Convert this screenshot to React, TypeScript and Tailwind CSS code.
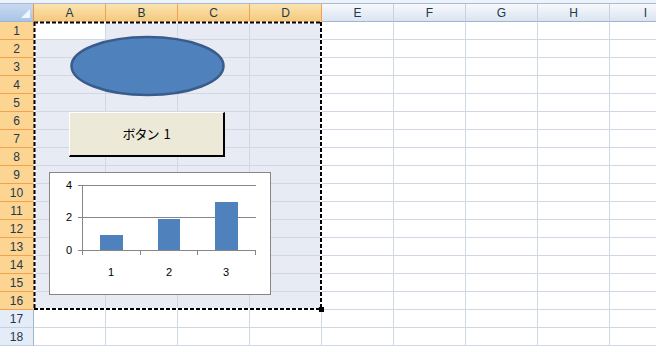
import React from "react";

const cols = ["A", "B", "C", "D", "E", "F", "G", "H", "I"];
const rows = Array.from({ length: 18 }, (_, i) => i + 1);

function ColHeader({ label, selected }: { label: string; selected: boolean }) {
  return (
    <div
      className={
        selected
          ? "w-[72px] shrink-0 h-full flex items-center justify-center border-r border-b border-r-[#f2a24f] border-b-[#f29536] bg-linear-to-b from-[#fbe4b0] to-[#f5c97c]"
          : "w-[72px] shrink-0 h-full flex items-center justify-center border-r border-b border-r-[#c5d2e3] border-b-[#9eb6ce] bg-linear-to-b from-[#f7f9fc] to-[#dbe4f0]"
      }
    >
      {label}
    </div>
  );
}

function Row({ n }: { n: number }) {
  const sel = n <= 16;
  return (
    <div className="flex h-[18px]">
      <div
        className={
          sel
            ? "w-[34px] shrink-0 flex items-center justify-center border-r border-b border-r-[#f29536] border-b-[#f2a24f] bg-[#fdd592]"
            : "w-[34px] shrink-0 flex items-center justify-center border-r border-b border-r-[#9eb6ce] border-b-[#c5d2e3] bg-[#e4ecf7]"
        }
      >
        {n}
      </div>
      {cols.map((c, i) => {
        const inSel = sel && i < 4;
        const active = n === 1 && i === 0;
        return (
          <div
            key={c}
            className={
              active || !inSel
                ? "w-[72px] shrink-0 border-r border-b border-[#d0d7e5] bg-white"
                : "w-[72px] shrink-0 border-r border-b border-[#d0d7e5] bg-[#e9ebf4]"
            }
          />
        );
      })}
    </div>
  );
}

function Chart() {
  return (
    <svg
      className="absolute left-[49px] top-[172px] text-[11px] font-['Liberation_Sans',Arial,sans-serif]"
      width={222}
      height={123}
      viewBox="49 172 222 123"
    >
      <rect x={49.5} y={172.5} width={221} height={122} fill="#ffffff" stroke="#868686" />
      <line x1={78} y1={185.5} x2={256} y2={185.5} stroke="#868686" />
      <line x1={78} y1={217.5} x2={256} y2={217.5} stroke="#868686" />
      <line x1={78} y1={250.5} x2={256} y2={250.5} stroke="#868686" />
      <line x1={82.5} y1={185} x2={82.5} y2={255} stroke="#868686" />
      <line x1={140.5} y1={250} x2={140.5} y2={255} stroke="#868686" />
      <line x1={197.5} y1={250} x2={197.5} y2={255} stroke="#868686" />
      <line x1={255.5} y1={250} x2={255.5} y2={255} stroke="#868686" />
      <rect x={100} y={235} width={23} height={15} fill="#4f81bd" />
      <rect x={158} y={219} width={22} height={31} fill="#4f81bd" />
      <rect x={215} y={202} width={23} height={48} fill="#4f81bd" />
      <text x={72} y={189} textAnchor="end" fill="#000">4</text>
      <text x={72} y={221} textAnchor="end" fill="#000">2</text>
      <text x={72} y={254} textAnchor="end" fill="#000">0</text>
      <text x={111} y={276} textAnchor="middle" fill="#000">1</text>
      <text x={169} y={276} textAnchor="middle" fill="#000">2</text>
      <text x={226} y={276} textAnchor="middle" fill="#000">3</text>
    </svg>
  );
}

export default function App() {
  return (
    <div className="relative w-[656px] h-[349px] overflow-hidden bg-white text-[12px] text-[#22394d] font-['Liberation_Sans',Arial,sans-serif]">
      <div className="h-[4px] bg-[#eef3fa] border-b border-[#a6bcd6]" />
      <div className="flex h-[18px]">
        <div className="relative w-[34px] shrink-0 h-full border-r border-b border-r-[#f29536] border-b-[#9eb6ce] bg-linear-to-b from-[#c9daf2] to-[#a9c4e8]">
          <svg className="absolute right-[3px] bottom-[3px]" width={9} height={9} viewBox="0 0 9 9">
            <polygon points="9,0 9,9 0,9" fill="#f2f5fa" />
          </svg>
        </div>
        {cols.map((c, i) => (
          <ColHeader key={c} label={c} selected={i < 4} />
        ))}
      </div>
      {rows.map((n) => (
        <Row key={n} n={n} />
      ))}

      {/* Ellipse shape */}
      <svg className="absolute left-[69px] top-[35px]" width={157} height={62} viewBox="0 0 157 62">
        <ellipse cx={78.5} cy={31} rx={76} ry={29} fill="#4f81bd" stroke="#385d8a" strokeWidth={2.5} />
      </svg>

      {/* Button */}
      <div className="absolute left-[69px] top-[112px] w-[156px] h-[45px] flex items-center justify-center gap-[5px] bg-[#ece9d8] border-t border-l border-t-white border-l-white border-r-2 border-b-2 border-r-black border-b-black text-[13px] text-black font-['Noto_Sans_CJK_JP','Liberation_Sans',sans-serif]">
        <span className="tracking-[-1px]">ボタン</span>
        <span>1</span>
      </div>

      <Chart />

      {/* Copy selection marching ants */}
      <svg className="absolute left-0 top-0 pointer-events-none" width={656} height={349}>
        <g fill="none">
          <line x1={34} y1={22.5} x2={322} y2={22.5} stroke="#fff" strokeWidth={2} />
          <line x1={34} y1={22.5} x2={322} y2={22.5} stroke="#000" strokeWidth={2} strokeDasharray="4 2" />
          <line x1={34.5} y1={22} x2={34.5} y2={310} stroke="#fff" strokeWidth={2} />
          <line x1={34.5} y1={22} x2={34.5} y2={310} stroke="#000" strokeWidth={2} strokeDasharray="4 2" />
          <line x1={321} y1={22} x2={321} y2={310} stroke="#fff" strokeWidth={2} />
          <line x1={321} y1={22} x2={321} y2={310} stroke="#000" strokeWidth={2} strokeDasharray="4 2" />
          <line x1={34} y1={309} x2={322} y2={309} stroke="#fff" strokeWidth={2} />
          <line x1={34} y1={309} x2={322} y2={309} stroke="#000" strokeWidth={2} strokeDasharray="4 2" />
        </g>
        <rect x={319} y={307} width={5} height={5} fill="#000" />
      </svg>
    </div>
  );
}
